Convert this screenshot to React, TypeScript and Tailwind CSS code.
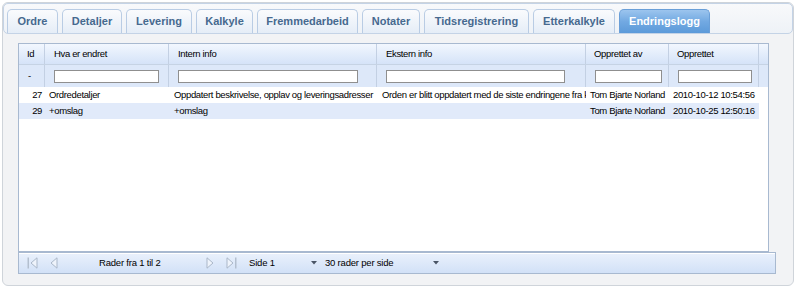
import React from "react";

const tabs = [
  { label: "Ordre", w: "w-[51px]" },
  { label: "Detaljer", w: "w-[60px]" },
  { label: "Levering", w: "w-[66px]" },
  { label: "Kalkyle", w: "w-[57px]" },
  { label: "Fremmedarbeid", w: "w-[101px]" },
  { label: "Notater", w: "w-[58px]" },
  { label: "Tidsregistrering", w: "w-[105px]" },
  { label: "Etterkalkyle", w: "w-[82px]" },
  { label: "Endringslogg", w: "w-[91px]", active: true },
];

// column widths incl. right border
const cols = [
  { title: "Id", w: "w-[26px]", pl: "pl-[8px]", input: null },
  { title: "Hva er endret", w: "w-[124px]", pl: "pl-[9px]", input: "w-[105px]" },
  { title: "Intern info", w: "w-[208px]", pl: "pl-[9px]", input: "w-[180px]" },
  { title: "Ekstern info", w: "w-[209px]", pl: "pl-[9px]", input: "w-[179px]" },
  { title: "Opprettet av", w: "w-[83px]", pl: "pl-[8px]", input: "w-[67px]" },
  { title: "Opprettet", w: "w-[90px]", pl: "pl-[8px]", input: "w-[74px]" },
];

const rows = [
  {
    id: 27,
    what: "Ordredetaljer",
    intern: "Oppdatert beskrivelse, opplav og leveringsadresser",
    ekstern: "Orden er blitt oppdatert med de siste endringene fra kunden",
    by: "Tom Bjarte Norland",
    at: "2010-10-12 10:54:56",
  },
  {
    id: 29,
    what: "+omslag",
    intern: "+omslag",
    ekstern: "",
    by: "Tom Bjarte Norland",
    at: "2010-10-25 12:50:16",
  },
];

function NavIcon({ dir, bar }: { dir: "left" | "right"; bar?: boolean }) {
  const w = bar ? 11 : 8;
  return (
    <svg width={w} height="12" viewBox={`0 0 ${w} 12`} className="shrink-0">
      {dir === "left" ? (
        <>
          {bar && <rect x="0.5" y="0.5" width="1.5" height="11" fill="#b3bfcf" />}
          <path
            d={bar ? "M10 0.8 L4 6 L10 11.2 Z" : "M7 0.8 L1 6 L7 11.2 Z"}
            fill="#eef3fb"
            stroke="#aab7c9"
            strokeWidth="1"
          />
        </>
      ) : (
        <>
          <path d="M1 0.8 L7 6 L1 11.2 Z" fill="#eef3fb" stroke="#aab7c9" strokeWidth="1" />
          {bar && <rect x="9" y="0.5" width="1.5" height="11" fill="#b3bfcf" />}
        </>
      )}
    </svg>
  );
}

function Caret() {
  return (
    <svg width="6" height="4" viewBox="0 0 6 4" className="shrink-0">
      <path d="M0 0 L6 0 L3 3.5 Z" fill="#4a5566" />
    </svg>
  );
}

export default function App() {
  return (
    <div className="w-[796px] h-[288px] bg-white pt-[2px] pl-[2px] font-['Liberation_Sans',Arial,sans-serif]">
      <div className="w-[792px] h-[284px] rounded-[6px] border border-[#cfd4da] bg-[#f2f3f5] flex flex-col">
        {/* Tab strip */}
        <div className="h-[31px] rounded-[5px] border border-[#c4d3e6] bg-gradient-to-b from-[#f8f9fb] to-[#eef2f7] flex items-end pl-[3px] gap-[4px]">
          {tabs.map((t) => (
            <div
              key={t.label}
              className={
                t.active
                  ? `${t.w} h-[24px] rounded-t-[5px] border border-b-0 border-[#6a9fd8] bg-gradient-to-b from-[#9cc5ee] via-[#72a9e2] to-[#5c9ad9] text-white flex items-center justify-center text-[11px] font-bold`
                  : `${t.w} h-[24px] rounded-t-[5px] border border-b-0 border-[#b9cce4] bg-gradient-to-b from-[#fafbfd] to-[#e5edf7] text-[#46698f] flex items-center justify-center text-[11px] font-bold`
              }
            >
              {t.label}
            </div>
          ))}
        </div>

        {/* Grid */}
        <div className="ml-[15px] mt-[9px] w-[751px] h-[209px] border border-[#a8b9d0] bg-white flex flex-col text-[9.5px] tracking-[-0.35px] text-black">
          {/* header */}
          <div className="flex h-[21px] border-b border-[#c6d3e4] bg-gradient-to-b from-[#f2f7fe] to-[#d5e3f8]">
            {cols.map((c) => (
              <div
                key={c.title}
                className={`${c.w} ${c.pl} shrink-0 border-r border-[#c3d0e3] flex items-center whitespace-nowrap overflow-hidden`}
              >
                {c.title}
              </div>
            ))}
            <div className="flex-1" />
          </div>
          {/* filter row */}
          <div className="flex h-[22px] bg-[#dde8f9]">
            {cols.map((c) => (
              <div
                key={c.title}
                className={`${c.w} pl-[9px] shrink-0 border-r border-[#c3d0e3] flex items-center`}
              >
                {c.input ? (
                  <div className={`${c.input} h-[13px] border border-[#8f8f8f] bg-white`} />
                ) : (
                  <span>-</span>
                )}
              </div>
            ))}
            <div className="flex-1" />
          </div>
          {/* body */}
          <div className="flex-1 w-[740px]">
            {rows.map((r, i) => (
              <div
                key={r.id}
                className={`flex h-[16px] items-center whitespace-nowrap ${i % 2 === 1 ? "bg-[#e1eafa]" : "bg-white"}`}
              >
                <div className="w-[26px] shrink-0 text-right pr-[3px]">{r.id}</div>
                <div className="w-[124px] shrink-0 pl-[4px] overflow-hidden">{r.what}</div>
                <div className="w-[208px] shrink-0 pl-[5px] overflow-hidden">{r.intern}</div>
                <div className="w-[209px] shrink-0 pl-[5px] overflow-hidden">{r.ekstern}</div>
                <div className="w-[83px] shrink-0 pl-[4px] overflow-hidden">{r.by}</div>
                <div className="w-[90px] shrink-0 pl-[4px] overflow-hidden">{r.at}</div>
              </div>
            ))}
          </div>
        </div>

        {/* Pager */}
        <div className="ml-[15px] w-[758px] h-[22px] border border-[#a8b9d0] bg-gradient-to-b from-[#eaf1fc] to-[#d2e1f7] shadow-[inset_0_1px_0_#ffffff] flex items-center pl-[8px] text-[9.5px] tracking-[-0.2px] text-black whitespace-nowrap">
          <NavIcon dir="left" bar />
          <div className="ml-[12px]">
            <NavIcon dir="left" />
          </div>
          <div className="ml-[41px] w-[107px]">Rader fra 1 til 2</div>
          <NavIcon dir="right" />
          <div className="ml-[12px]">
            <NavIcon dir="right" bar />
          </div>
          <div className="ml-[12px] w-[62px]">Side 1</div>
          <Caret />
          <div className="ml-[8px] w-[108px]">30 rader per side</div>
          <Caret />
        </div>
      </div>
    </div>
  );
}
